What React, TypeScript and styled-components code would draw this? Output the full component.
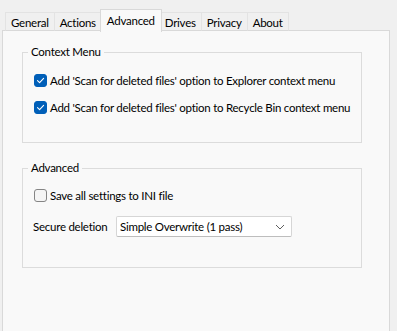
import React from "react";
import styled, { createGlobalStyle } from "styled-components";

const Global = createGlobalStyle`
  html, body { margin: 0; padding: 0; }
  body {
    background: #f0f0f0;
    font-family: "Lato", "Noto Sans", sans-serif;
    font-size: 11.5px;
    letter-spacing: -0.25px;
    color: #000;
  }
`;

const Window = styled.div`
  width: 397px;
  height: 331px;
  display: flex;
  flex-direction: column;
  padding: 0 7px 0 2px;
  box-sizing: border-box;
  overflow: hidden;
`;

const TabStrip = styled.div`
  height: 31px;
  display: flex;
  align-items: flex-end;
  padding-left: 3px;
  position: relative;
  z-index: 1;
`;

const Tab = styled.div<{ $active?: boolean }>`
  box-sizing: border-box;
  height: ${(p) => (p.$active ? "23px" : "19px")};
  margin: ${(p) => (p.$active ? "0 -2px -1px" : "0")};
  padding: ${(p) => (p.$active ? "0 6px 2px" : "1px 5px 0")};
  display: flex;
  align-items: center;
  border: 1px solid ${(p) => (p.$active ? "#d9d9d9" : "#e3e3e3")};
  border-bottom: ${(p) => (p.$active ? "none" : "1px solid #d9d9d9")};
  background: ${(p) => (p.$active ? "#f9f9f9" : "#f0f0f0")};
  margin-left: ${(p) => (p.$active ? "-2px" : "-1px")};
  position: relative;
  z-index: ${(p) => (p.$active ? 2 : 1)};
  white-space: nowrap;
  &:first-child { margin-left: 0; }
`;

const Panel = styled.div`
  flex: 1;
  background: #f9f9f9;
  border: 1px solid #d9d9d9;
  border-bottom: none;
  margin-top: -1px;
  padding: 13px 27px 0 19px;
  display: flex;
  flex-direction: column;
`;

const Group = styled.fieldset<{ $gapTop?: number; $padTop: number; $padBottom: number }>`
  margin: ${(p) => p.$gapTop ?? 0}px 0 0;
  padding: ${(p) => p.$padTop}px 10px ${(p) => p.$padBottom}px 11px;
  border: 1px solid #dcdcdc;
  display: flex;
  flex-direction: column;
  min-width: 0;
`;

const Legend = styled.legend`
  padding: 0 3px;
  margin-left: -6px;
  line-height: 16px;
`;

const Row = styled.label<{ $gap?: number }>`
  display: flex;
  align-items: center;
  height: 20px;
  margin-top: ${(p) => p.$gap ?? 0}px;
  white-space: nowrap;
`;

const Box = styled.span<{ $checked?: boolean }>`
  width: 13px;
  height: 13px;
  box-sizing: border-box;
  border-radius: 3px;
  margin-right: 3px;
  flex: none;
  display: flex;
  align-items: center;
  justify-content: center;
  background: ${(p) => (p.$checked ? "#005fb8" : "#f5f5f5")};
  border: 1px solid ${(p) => (p.$checked ? "#005fb8" : "#858585")};
`;

const FieldRow = styled.div<{ $gap?: number }>`
  display: flex;
  align-items: center;
  margin-top: ${(p) => p.$gap ?? 0}px;
  margin-left: -1px;
  white-space: nowrap;
`;

const FieldLabel = styled.span`
  width: 83px;
  flex: none;
`;

const Select = styled.div`
  width: 176px;
  height: 21px;
  box-sizing: border-box;
  background: #fff;
  border: 1px solid #d6d6d6;
  border-bottom-color: #bdbdbd;
  border-radius: 2px;
  display: flex;
  align-items: center;
  justify-content: space-between;
  padding: 0 6px 0 3px;
`;

function Check({ checked }: { checked?: boolean }) {
  return (
    <Box $checked={checked}>
      {checked && (
        <svg width="9" height="9" viewBox="0 0 9 9">
          <path d="M1.5 4.7 L3.6 6.7 L7.6 2.4" fill="none" stroke="#fff" strokeWidth="1.1" strokeLinecap="round" strokeLinejoin="round" />
        </svg>
      )}
    </Box>
  );
}

export default function App() {
  const tabs = ["General", "Actions", "Advanced", "Drives", "Privacy", "About"];
  return (
    <>
      <Global />
      <Window>
        <TabStrip>
          {tabs.map((t) => (
            <Tab key={t} $active={t === "Advanced"}>{t}</Tab>
          ))}
        </TabStrip>
        <Panel>
          <Group $padTop={10} $padBottom={25}>
            <Legend>Context Menu</Legend>
            <Row>
              <Check checked />
              Add 'Scan for deleted files' option to Explorer context menu
            </Row>
            <Row $gap={7}>
              <Check checked />
              Add 'Scan for deleted files' option to Recycle Bin context menu
            </Row>
          </Group>
          <Group $gapTop={17} $padTop={9} $padBottom={30}>
            <Legend>Advanced</Legend>
            <Row>
              <Check />
              Save all settings to INI file
            </Row>
            <FieldRow $gap={11}>
              <FieldLabel>Secure deletion</FieldLabel>
              <Select>
                <span>Simple Overwrite (1 pass)</span>
                <svg width="10" height="6" viewBox="0 0 10 6">
                  <path d="M1 1 L5 5 L9 1" fill="none" stroke="#5f5f5f" strokeWidth="1" />
                </svg>
              </Select>
            </FieldRow>
          </Group>
        </Panel>
      </Window>
    </>
  );
}
